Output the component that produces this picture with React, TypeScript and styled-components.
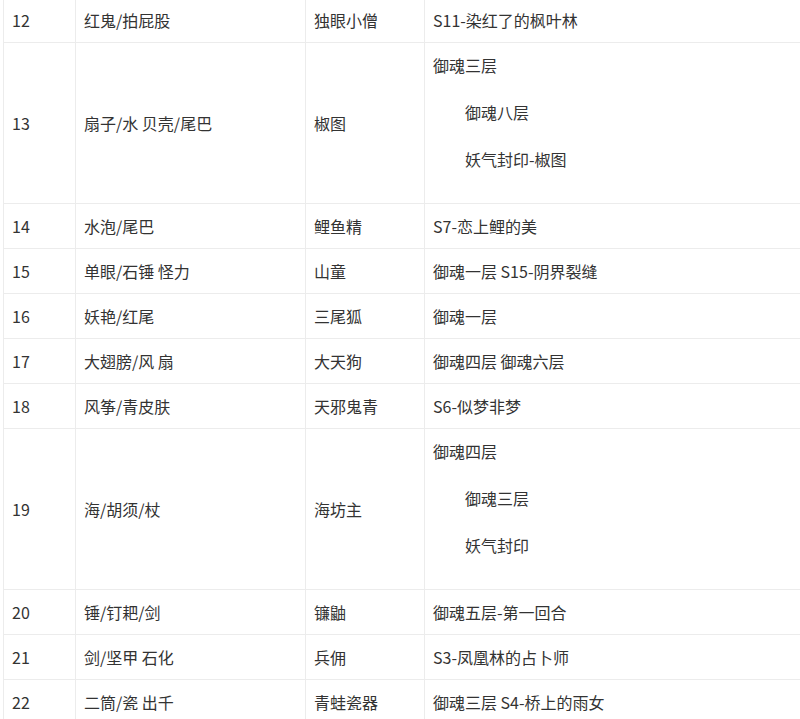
import styled, { createGlobalStyle } from 'styled-components';

interface RowData {
  id: number;
  clue: string;
  name: string;
  places: string[];
}

const rows: RowData[] = [
  { id: 12, clue: '红鬼/拍屁股', name: '独眼小僧', places: ['S11-染红了的枫叶林'] },
  { id: 13, clue: '扇子/水 贝壳/尾巴', name: '椒图', places: ['御魂三层', '御魂八层', '妖气封印-椒图'] },
  { id: 14, clue: '水泡/尾巴', name: '鲤鱼精', places: ['S7-恋上鲤的美'] },
  { id: 15, clue: '单眼/石锤 怪力', name: '山童', places: ['御魂一层 S15-阴界裂缝'] },
  { id: 16, clue: '妖艳/红尾', name: '三尾狐', places: ['御魂一层'] },
  { id: 17, clue: '大翅膀/风 扇', name: '大天狗', places: ['御魂四层 御魂六层'] },
  { id: 18, clue: '风筝/青皮肤', name: '天邪鬼青', places: ['S6-似梦非梦'] },
  { id: 19, clue: '海/胡须/杖', name: '海坊主', places: ['御魂四层', '御魂三层', '妖气封印'] },
  { id: 20, clue: '锤/钉耙/剑', name: '镰鼬', places: ['御魂五层-第一回合'] },
  { id: 21, clue: '剑/坚甲 石化', name: '兵佣', places: ['S3-凤凰林的占卜师'] },
  { id: 22, clue: '二筒/瓷 出千', name: '青蛙瓷器', places: ['御魂三层 S4-桥上的雨女'] },
];

const GlobalStyle = createGlobalStyle`
  html, body {
    margin: 0;
    padding: 0;
    background: #ffffff;
    overflow: hidden;
  }
  body {
    font-family: "Noto Sans CJK SC", "Noto Sans", sans-serif;
    color: #333333;
  }
`;

// the shot is scrolled: the top edge of row 12 sits just above the frame
const Page = styled.div`
  padding-left: 3px;
  margin-top: -3px;
  width: 840px;
`;

const Table = styled.table`
  border-collapse: collapse;
  table-layout: fixed;
  width: 840px;
  font-size: 16px;
  line-height: 24px;
`;

const Cell = styled.td<{ $width: number }>`
  width: ${(p) => p.$width}px;
  box-sizing: border-box;
  border: 1px solid #ececec;
  padding: 10px 8px;
  vertical-align: middle;
  white-space: nowrap;
`;

const Indented = styled.p`
  margin: 23px 0 0;
  text-indent: 2em;

  &:last-child {
    margin-bottom: 22px;
  }
`;

const widths = [72, 230, 119, 419];

function PlaceCell({ places }: { places: string[] }) {
  const [first, ...rest] = places;
  return (
    <Cell $width={widths[3]}>
      {first}
      {rest.map((p) => (
        <Indented key={p}>{p}</Indented>
      ))}
    </Cell>
  );
}

export default function App() {
  return (
    <>
      <GlobalStyle />
      <Page>
        <Table>
          <tbody>
            {rows.map((r) => (
              <tr key={r.id}>
                <Cell $width={widths[0]}>{r.id}</Cell>
                <Cell $width={widths[1]}>{r.clue}</Cell>
                <Cell $width={widths[2]}>{r.name}</Cell>
                <PlaceCell places={r.places} />
              </tr>
            ))}
          </tbody>
        </Table>
      </Page>
    </>
  );
}
